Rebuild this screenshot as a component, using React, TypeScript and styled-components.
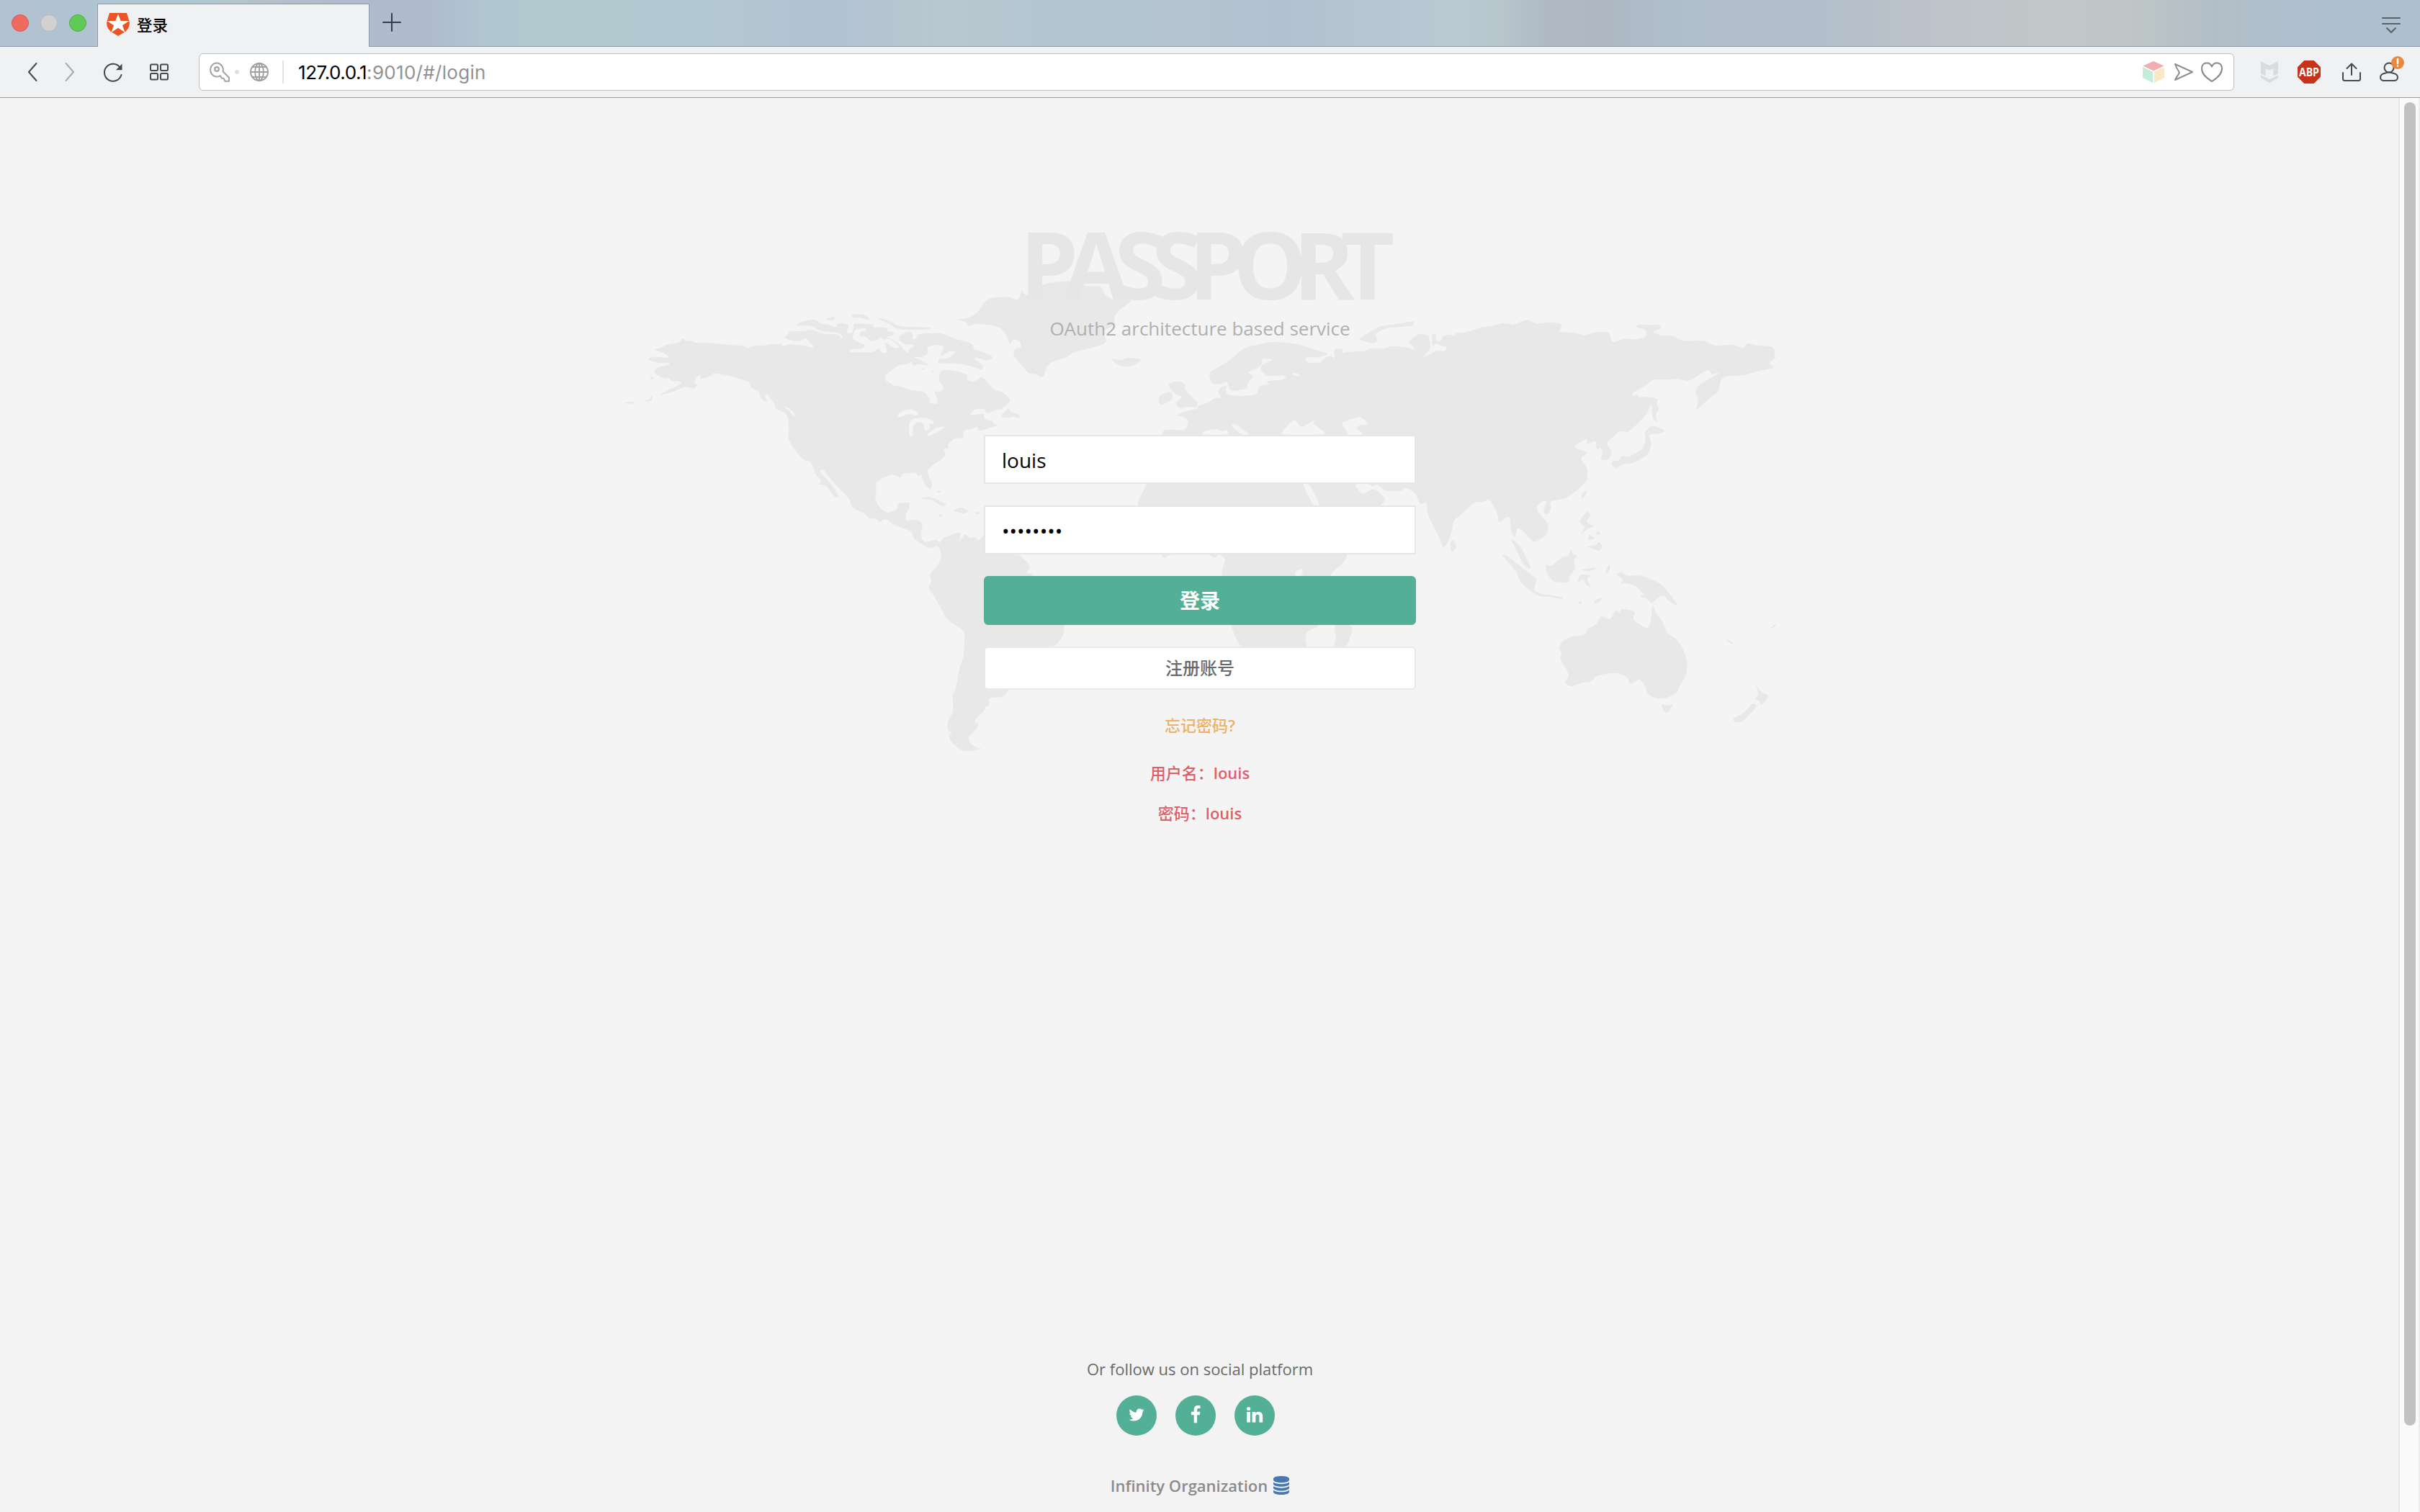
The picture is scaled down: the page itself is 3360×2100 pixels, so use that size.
import React from "react";
import styled, { createGlobalStyle } from "styled-components";

const LAND = "#e8e8e8";
const WATER = "#f4f4f4";
const GREEN = "#53b096";

const GlobalStyle = createGlobalStyle`
  *, *::before, *::after { box-sizing: border-box; }
  html, body { margin: 0; padding: 0; }
  body {
    font-family: "Open Sans", "Noto Sans CJK SC", sans-serif;
    background: #f3f3f3;
    overflow: hidden;
  }
`;

/* ---------- browser frame ---------- */

const Browser = styled.div`
  width: 3360px;
  height: 2100px;
  display: flex;
  flex-direction: column;
  overflow: hidden;
`;

const TabStrip = styled.header`
  height: 65px;
  flex: none;
  display: flex;
  align-items: stretch;
  border-bottom: 1px solid #8a98a8;
  background: linear-gradient(
    90deg,
    #b3c1d1 0%, #b0c4d1 4%, #afc7d0 8%, #b5c3cc 10%, #b0bbcb 14%, #afbacd 17.5%,
    #b0c6d0 20%, #b2c9cf 22.5%, #b3c8d1 30%, #b1c2d2 34%, #b9c8cf 39%, #b2c5d1 44%,
    #b4c5d1 48%, #b2c1d0 53%, #bacad3 60%, #b8c6cd 62%, #aeb9c3 64%, #adb8c2 66.5%,
    #b0becb 69%, #b4bfca 76%, #bec3ca 80%, #c2c8c8 85%, #bdc5c6 88.5%, #b2bec7 91.5%,
    #afbfce 95%, #aebfce 100%
  );
`;

const WindowButtons = styled.div`
  width: 135px;
  display: flex;
  gap: 16px;
  padding: 20px 0 0 16px;
`;

const WindowDot = styled.span<{ $fill: string; $edge: string }>`
  width: 24px;
  height: 24px;
  border-radius: 50%;
  background: ${(p) => p.$fill};
  border: 1px solid ${(p) => p.$edge};
`;

const Tab = styled.div`
  width: 378px;
  height: 61px;
  margin: 5px 0 -1px;
  padding: 0 0 4px 12px;
  display: flex;
  align-items: center;
  gap: 10px;
  background: #eff1f3;
  border: 1px solid #8a98a8;
  border-bottom: none;
`;

const TabTitle = styled.span`
  font: 500 21.5px/24px "Noto Sans CJK SC", sans-serif;
  padding-bottom: 1px;
  color: #000;
`;

const NewTab = styled.div`
  padding: 18px 0 0 18px;
`;

const TabMenu = styled.div`
  margin-left: auto;
  padding: 22px 27px 0 0;
`;

const Toolbar = styled.nav`
  height: 71px;
  flex: none;
  display: flex;
  align-items: center;
  padding: 0 29px 0 36px;
  background: #eff1f3;
  border-bottom: 1px solid #8f9ba7;
`;

const NavIcons = styled.div`
  width: 240px;
  display: flex;
  align-items: center;
`;

const AddressBar = styled.div`
  width: 2826px;
  height: 52px;
  display: flex;
  align-items: center;
  padding: 0 15px 0 14px;
  background: #fff;
  border: 1px solid #b9bdc1;
  border-radius: 6px;
`;

const SecurityDot = styled.span`
  width: 6px;
  height: 6px;
  margin: 0 15px 0 7px;
  border-radius: 50%;
  background: #dde1e3;
`;

const Divider = styled.span`
  width: 2px;
  height: 32px;
  margin: 0 20px 0 19px;
  background: #e1e2e4;
`;

const Url = styled.span`
  flex: 1;
  padding-top: 2px;
  font: 400 26px/32px Inter, "Liberation Sans", sans-serif;
  letter-spacing: 0.3px;
  color: #929292;
  b { font-weight: 400; color: #000; letter-spacing: -0.42px; }
`;

const Extensions = styled.div`
  flex: 1;
  display: flex;
  align-items: center;
  justify-content: flex-end;
`;

const Glyph = styled.svg<{ $gap?: number }>`
  display: block;
  flex: none;
  margin-left: ${(p) => p.$gap ?? 0}px;
  overflow: visible;
`;

/* ---------- page ---------- */

const Viewport = styled.div`
  flex: 1;
  display: flex;
  min-height: 0;
`;

const Page = styled.main`
  position: relative;
  width: 3330px;
  padding-left: 2px;
  display: flex;
  flex-direction: column;
  align-items: center;
  background: linear-gradient(180deg, #f3f3f3 0, #f4f4f4 130px, #f4f4f4 1030px, #f3f3f3 1036px, #f3f3f3 100%);
`;

const ScrollTrack = styled.aside`
  width: 30px;
  padding: 6px 4px 0 6px;
  background: #fafafa;
  border-left: 2px solid #e7e7e7;
  border-right: 2px solid #ececec;
`;

const ScrollThumb = styled.div`
  width: 16px;
  height: 1838px;
  border-radius: 8px;
  background: #c1c1c1;
`;

const WorldMap = styled.svg`
  position: absolute;
  left: 840px;
  top: 244px;
  width: 1660px;
  height: 680px;
`;

const Content = styled.div`
  position: relative;
  width: 600px;
  flex: 1;
  display: flex;
  flex-direction: column;
  align-items: center;
`;

const Logo = styled.h1`
  margin: 165px 0 0;
  height: 130px;
  font-size: 130px;
  line-height: 130px;
  font-weight: 700;
  letter-spacing: -20px;
  color: #e6e6e6;
`;

const Tagline = styled.h3`
  margin: 5px 0 0;
  height: 40px;
  font-size: 26px;
  line-height: 40px;
  font-weight: 400;
  color: #b0b0b0;
  white-space: nowrap;
`;

const Form = styled.form`
  width: 600px;
  margin-top: 128px;
  display: flex;
  flex-direction: column;
  gap: 30px;
`;

const Field = styled.input`
  width: 100%;
  height: 68px;
  padding: 1px 23px 0;
  border: 2px solid #e5e6e7;
  border-radius: 2px;
  background: #fff;
  font: 400 28px/40px "Open Sans", sans-serif;
  color: #000;
  outline: none;
`;

const Button = styled.button<{ $primary?: boolean }>`
  width: 100%;
  height: ${(p) => (p.$primary ? 68 : 60)}px;
  padding: 0 0 3px;
  border: 2px solid ${(p) => (p.$primary ? GREEN : "#e7eaec")};
  border-radius: 6px;
  background: ${(p) => (p.$primary ? GREEN : "#fff")};
  color: ${(p) => (p.$primary ? "#fff" : "#676a6c")};
  font: ${(p) => (p.$primary ? "700 28px/40px" : "500 24px/34px")} "Noto Sans CJK SC", sans-serif;
`;

const Note = styled.p<{ $color: string; $top: number }>`
  margin: ${(p) => p.$top}px 0 0;
  height: 30px;
  font-size: 22px;
  line-height: 30px;
  font-weight: 600;
  color: ${(p) => p.$color};
  white-space: nowrap;
`;

const Cjk = styled.span`
  font-family: "Noto Sans CJK SC", sans-serif;
  font-weight: 500;
`;

const Footer = styled.footer`
  margin-top: auto;
  height: 214px;
  display: flex;
  flex-direction: column;
  align-items: center;
`;

const FollowText = styled.p`
  margin: 0;
  font-size: 22px;
  line-height: 30px;
  color: #676a6c;
`;

const SocialRow = styled.div`
  display: flex;
  gap: 26px;
  margin: 22px 11px 0 0;
`;

const SocialLink = styled.a`
  width: 56px;
  height: 56px;
  border-radius: 50%;
  background: ${GREEN};
  display: flex;
  align-items: center;
  justify-content: center;
  padding-bottom: 2px;
`;

const Organization = styled.div`
  display: flex;
  align-items: center;
  margin-top: 53px;
  font-size: 22px;
  line-height: 32px;
  font-weight: 600;
  color: #8b8b8b;
`;

/* ---------- map geometry ---------- */

type Ring = string;

/* Turns a list of "x y" pairs into a closed path with softly rounded corners. */
function coast(ring: Ring): string {
  const n = ring.trim().split(/[\s,]+/).map(Number);
  const pts: [number, number][] = [];
  for (let i = 0; i + 1 < n.length; i += 2) pts.push([n[i], n[i + 1]]);
  const mix = (a: [number, number], b: [number, number], t: number) =>
    `${(a[0] + (b[0] - a[0]) * t).toFixed(1)} ${(a[1] + (b[1] - a[1]) * t).toFixed(1)}`;
  let d = "";
  pts.forEach((p, i) => {
    const prev = pts[(i + pts.length - 1) % pts.length];
    const next = pts[(i + 1) % pts.length];
    d += `${i ? "L" : "M"}${mix(p, prev, 0.32)}Q${p[0]} ${p[1]} ${mix(p, next, 0.32)}`;
  });
  return d + "Z";
}

interface Region {
  transform: string;
  land: Ring[];
  water: Ring[];
}

const REGIONS: Region[] = [
  {
    transform: "scale(0.35714 0.33333)",
    land: [
      `187 317 215 310 240 296 290 287 301 270 318 282 335 279 350 289 400 288 500 299 535 298 555 314 575 300 630 299 648 291
       675 296 685 289 690 304 715 294 775 299 815 313 800 292 780 266 764 280 735 281 695 269 710 254 714 240 770 240 808 232
       850 254 905 251 925 277 920 252 885 243 838 240 800 217 738 217 765 200 800 191 825 195 835 207 880 215 895 226 906 204
       950 212 937 250 960 248 968 225 965 208 1043 210 1045 226 1075 222 1100 228 1095 240 1125 243 1120 258 1090 262 1110 272 1140 290
       1155 308 1170 325 1178 330 1180 318 1207 298 1165 295 1142 277 1145 258 1180 240 1195 248 1197 276 1213 270 1215 252 1305 246
       1360 272 1428 290 1435 318 1460 322 1512 347 1488 363 1440 350 1436 356 1470 382 1468 402 1425 387 1400 380 1350 372 1295 376
       1298 355 1335 355 1367 325 1340 321 1308 346 1303 332 1322 305 1292 295 1250 307 1258 330 1235 350 1197 346 1235 364
       1264 384 1215 376 1202 387 1188 362 1183 376 1145 380 1120 398 1088 425 1092 448 1110 455 1120 468 1150 470 1185 485 1242 492
       1262 520 1262 541 1292 543 1292 520 1278 490 1310 492 1316 470 1298 450 1302 404 1350 402 1410 420 1408 445 1432 451 1450 440
       1466 427 1515 486 1545 492 1582 528 1540 565 1510 570 1495 582 1478 578 1475 563 1440 563 1412 592 1475 582 1472 600
       1490 612 1505 613 1510 626 1532 632 1500 640 1455 657 1445 635 1430 647 1395 652 1395 685 1355 687 1335 710 1335 731
       1316 728 1326 760 1253 815 1255 835 1274 880 1265 902 1240 875 1232 838 1215 845 1210 828 1160 832 1148 852 1135 842 1110 837
       1082 850 1053 870 1055 905 1050 935 1060 965 1085 990 1100 997 1135 985 1138 957 1185 953 1183 975 1170 1000 1170 1030
       1215 1024 1236 1045 1228 1080 1230 1105 1248 1120 1290 1108 1306 1128 1262 1145 1232 1128 1200 1105 1192 1072 1130 1052
       1090 1020 1068 1037 1055 1022 1025 1018 1010 1000 960 975 948 935 920 905 880 860 848 815 833 822 885 885 908 925 900 935
       880 915 858 880 830 880 842 862 820 840 800 783 770 777 735 730 711 690 716 635 710 595 700 580 663 562 660 545 630 500
       620 510 634 540 604 520 600 490 568 478 562 452 500 430 425 413 405 430 370 440 371 420 360 425 345 455 361 462 345 480
       312 470 265 492 208 508 245 485 297 460 293 449 258 448 243 430 238 440 215 432 188 410 205 390 250 380 250 370 210 375
       165 357 185 345 250 352 240 337 215 326`,
      "850 192 895 175 891 196",
      "957 169 1012 171 1030 192 1010 190 990 182 957 184",
      "1052 182 1100 193 1145 221 1258 223 1272 231 1190 235 1135 232 1105 210",
      "73 538 95 533 118 538 95 543",
      "150 531 172 525 185 505 183 528 165 534",
      "172 436 186 428 190 437 180 440",
      "1229 398 1240 393 1244 402",
      "1267 408 1274 402 1278 412",
    ],
    water: [
      "950 328 955 315 1000 315 1012 296 988 288 960 272 972 232 1010 226 1020 236 990 244 990 260 1018 264 1032 284 1062 276 1072 262 1086 280 1098 330 1072 330 1066 308 1044 328",
      "1080 280 1100 268 1124 284 1148 308 1128 312 1098 292",
      "1136 590 1150 577 1185 562 1221 580 1212 593 1185 584 1145 600",
      "1183 678 1182 620 1205 602 1245 600 1275 612 1279 630 1260 622 1261 652 1242 654 1240 622 1215 618 1197 635 1196 678",
      "1248 682 1260 662 1290 640 1327 637 1290 662",
      "693 553 715 560 738 582 734 597 718 572",
    ],
  },
  {
    transform: "translate(360 0) scale(0.35714 0.44643)",
    land: [
      `230 840 268 832 285 845 310 820 374 803 370 832 382 820 392 810 412 824 430 819 445 832 462 815 480 810 540 860 600 872
       648 910 628 935 652 930 652 940 700 942 760 980 785 1040 778 1090 775 1125 745 1157 715 1160 640 1180 600 1230 560 1296 543 1317
       485 1320 485 1345 466 1348 472 1356 425 1392 447 1402 430 1422 405 1440 410 1460 440 1477 462 1476 410 1487 375 1483
       335 1455 328 1437 342 1430 322 1418 325 1390 346 1365 343 1305 355 1295 370 1230 375 1215 385 1195 391 1125 385 1110
       320 1075 300 1045 270 1000 247 978 263 955 253 935 285 910 301 880 292 852 270 843 250 854`,
      `356 143 400 140 440 122 470 85 500 74 560 72 600 84 612 48 628 70 700 30 800 22 860 40 920 38 935 65 965 82 1047 80
       990 115 970 135 975 160 925 180 945 215 880 232 810 245 785 262 725 275 705 295 700 320 685 323 665 312 640 312
       605 280 577 250 590 230 610 232 606 210 580 203 565 222 553 190 530 168 490 160 430 155 405 164 395 150`,
      "960 263 1000 270 1020 261 1082 266 1050 285 1015 291 978 282",
      "526 448 558 419 572 433 598 435 608 451 580 444 560 448",
      "211 700 250 693 280 702 324 720 300 724 262 703",
      "344 738 375 726 408 740 385 747",
      "431 742 446 740 447 748 436 749",
      "288 752 296 747 304 752 296 758",
      "283 678 291 674 299 679 290 683",
    ],
    water: [],
  },
  {
    transform: "translate(720 20) scale(0.34444)",
    land: [
      `211 515 250 495 298 488 300 475 335 465 375 440 396 446 381 422 390 400 418 392 412 412 418 432 470 435 540 431 545 395 592 388
       573 376 640 370 658 360 640 351 578 357 551 328 555 312 608 287 558 285 558 305 545 320 498 340 526 355 498 385 500 405 430 418
       415 374 400 387 360 388 350 375 344 340 390 315 430 290 480 245 530 230 600 215 700 225 760 245 828 265 790 281 733 278 740 302
       796 302 802 287 835 272 852 286 848 245 884 245 880 264 900 258 970 255 1000 242 1050 246 1080 233 1140 238 1174 250 1170 238
       1145 215 1195 182 1235 193 1262 180 1330 180 1370 182 1440 160 1500 150 1525 142 1580 148 1580 920 1555 920 1535 925 1511 947
       1508 905 1470 848 1455 862 1415 862 1330 935 1325 975 1310 1020 1288 1052 1275 1010 1225 910 1222 862 1205 872 1188 860
       1180 830 1140 804 1115 820 1055 818 1020 790 1005 800 985 790 928 790 962 836 1008 806 1058 850 1035 880
       940 960 908 1060 890 1105 825 1160 795 1360 740 1385 732 1410 742 1460 475 1460 430 1359 395 1160 400 1125 413 1095
       385 1072 365 1091 345 1073 180 1075 165 1090 150 1073 60 930 57 860 95 790 155 600 160 570 250 574 262 535 240 518`,
      "178 385 220 374 250 388 246 405 265 430 300 460 295 482 250 478 225 487 207 465 240 437 210 430 193 412",
      "143 435 182 417 199 428 195 450 155 473 140 465",
      "848 1355 928 1359 900 1450 846 1450 858 1410",
      "945 207 1030 155 1100 145 1174 134 1165 153 1110 158 1060 160 1014 185 1024 215 1005 225 965 212",
      "1318 1022 1330 1016 1343 1045 1325 1066 1317 1055",
    ],
    water: [
      "314 592 322 577 378 567 395 580 415 571 428 592",
      "436 547 452 550 512 592 480 594 440 562",
      "636 592 638 580 685 529 700 540 715 564 772 530 764 548 826 592",
      "876 545 915 530 955 517 992 550 945 555 938 566 972 594 905 596 900 575",
      "718 784 750 790 794 880 765 880",
      "691 1162 692 1140 722 1133 722 1150 712 1165",
      "677 342 700 343 711 356 690 355",
      "1226 180 1246 190 1242 235 1265 222 1276 234 1302 236 1298 256 1262 252 1204 284 1240 240",
      "1256 170 1262 215 1280 215 1284 194 1320 186 1352 208 1362 226 1372 222 1366 204 1326 176 1320 164",
    ],
  },
  {
    transform: "translate(1100 20) scale(0.35714 0.40816)",
    land: [
      `216 152 270 153 330 132 370 131 408 118 445 128 505 106 540 122 580 117 635 120 640 130 626 150 690 152 725 162 765 150
       825 149 832 182 848 185 875 172 920 175 965 169 970 142 923 132 940 123 975 126 1018 124 1029 137 990 149 1025 162 1070 162
       1112 181 1190 178 1230 197 1310 192 1345 208 1362 186 1390 195 1455 198 1468 210 1465 228 1473 238 1443 255 1469 273
       1410 280 1350 298 1270 300 1255 320 1248 355 1220 370 1158 420 1173 385 1158 355 1170 330 1262 284 1222 296 1215 278
       1190 285 1135 319 1090 308 1055 313 995 310 960 335 912 358 918 369 932 361 940 373 970 369 1014 378 1008 393 1019 412
       1003 430 1011 459 993 445 988 390 970 430 930 465 895 493 865 485 835 510 811 528 834 555 830 575 812 588 790 583 800 555
       788 542 775 554 772 518 736 533 740 511 687 537 700 548 744 560 710 580 738 610 740 655 690 695 650 718 592 726 600 750
       585 770 568 765 572 745 582 728 570 722 535 748 585 800 588 825 578 842 530 868 485 823 466 816 457 853 442 825 438 780
       422 780 395 801 390 765 355 714 343 725 300 725 245 775 215 790 212 830 179 887 170 860 120 775 118 723 90 737 78 705
       70 640 70 400 200 400`,
      "960 492 990 466 1045 485 1015 496 975 498 990 530 975 568 920 595 890 598 865 602 852 617 833 602 835 588 860 590 870 570 900 575 950 550 962 530 966 502",
      "713 718 722 695 739 687 732 708",
      "705 793 740 758 752 772 732 797 770 810 742 818 709 843 732 815",
      "745 838 772 853 740 858",
      "770 834 785 826 792 836 780 842",
      "733 880 775 875 782 861 799 878 785 896 765 888",
      "440 855 455 860 480 880 521 952 510 955 490 940 460 885",
      "401 903 430 912 510 970 544 988 530 1028 555 1040 585 1045 648 1053 640 1059 590 1050 545 1048 480 1005 460 960",
      "576 938 598 948 640 915 665 912 675 887 685 908 702 910 685 930 694 950 668 985 668 1003 605 1000 580 970",
      "699 1006 710 973 758 978 735 990 758 1024 735 1010 722 990",
      "717 958 778 950 760 962 720 962",
      "808 965 826 937 828 955 815 975",
      "849 973 870 965 890 980 945 977 1025 1005 1090 1075 1090 1084 1050 1062 1040 1047 1015 1050 990 1076 970 1055 941 1052 960 1042 930 1015 890 1003 866 1009 878 992",
      "702 1070 711 1065 720 1070 710 1078",
      "761 1077 775 1058 799 1054 790 1066",
      `627 1225 640 1203 670 1188 732 1180 738 1160 775 1145 790 1114 828 1130 850 1093 862 1106 872 1091 926 1100 915 1130
       972 1161 985 1140 990 1090 995 1078 1005 1105 1035 1140 1050 1178 1080 1190 1110 1225 1128 1270 1125 1315 1100 1350
       1085 1380 1045 1395 1005 1398 970 1380 965 1355 940 1328 930 1338 902 1349 897 1325 850 1308 775 1318 755 1340 720 1343
       675 1358 648 1343 669 1320 652 1290 632 1260 640 1243`,
      "1024 1414 1050 1422 1074 1414 1055 1444 1038 1444",
      "1394 1347 1412 1375 1449 1387 1415 1422 1408 1405 1389 1398 1405 1385",
      "1303 1467 1350 1445 1382 1411 1401 1422 1340 1478 1312 1478",
      "1276 1194 1305 1205 1300 1213",
      "1444 1161 1473 1141 1468 1153",
    ],
    water: [],
  },
];

const MapBackdrop = () => (
  <WorldMap viewBox="0 0 1660 680" aria-hidden="true">
    {REGIONS.map((r) => (
      <g key={r.transform} transform={r.transform}>
        {r.land.map((ring) => (
          <path key={ring} d={coast(ring)} fill={LAND} />
        ))}
        {r.water.map((ring) => (
          <path key={ring} d={coast(ring)} fill={WATER} />
        ))}
      </g>
    ))}
  </WorldMap>
);

/* ---------- icons ---------- */

const line = (color: string, width = 2) => ({
  fill: "none",
  stroke: color,
  strokeWidth: width,
  strokeLinecap: "round" as const,
  strokeLinejoin: "round" as const,
});

const Favicon = () => (
  <Glyph width="32" height="32" viewBox="0 0 32 32">
    <path
      fill="#eb5424"
      d="M4 0H28L31.3 11C33 17.5 30 22.5 26 26L16 32 6 26C2 22.500-1 17.500.7 11Z"
    />
    <path fill="#fff" d="M16 1.500 19.700 11H31.200L22 17.200 25.500 27 16 20.800 6.500 27 10 17.200.8 11H12.300Z" />
  </Glyph>
);

const Plus = () => (
  <Glyph width="26" height="26" viewBox="0 0 26 26">
    <path d="M13 1V25M1 13H25" {...line("#363c43")} />
  </Glyph>
);

const MenuIcon = () => (
  <Glyph width="26" height="24" viewBox="0 0 26 24">
    <path d="M1 3H25M1 11H25M7 17l6 6 6-6" {...line("#59626b")} />
  </Glyph>
);

const Back = () => (
  <Glyph width="14" height="26" viewBox="0 0 14 26" $gap={2}>
    <path d="M12.500 1 2 13 12.500 25" {...line("#47494b")} />
  </Glyph>
);

const Forward = () => (
  <Glyph width="14" height="26" viewBox="0 0 14 26" $gap={38}>
    <path d="M1.500 1 12 13 1.500 25" {...line("#a9abad")} />
  </Glyph>
);

const Reload = () => (
  <Glyph width="26" height="26" viewBox="0 0 26 26" $gap={40}>
    <path d="M22.500 6.500A12 12 0 1 0 24.500 17" {...line("#47494b")} />
    <path fill="#47494b" d="M25.500 1.500V10.300H17Z" />
  </Glyph>
);

const Speed = () => (
  <Glyph width="26" height="24" viewBox="0 0 26 24" $gap={38}>
    <g {...line("#47494b")}>
      <rect x="1" y="1.500" width="10" height="8.500" rx="1.500" />
      <rect x="15" y="1.500" width="10" height="8.500" rx="1.500" />
      <rect x="1" y="14" width="10" height="8.500" rx="1.500" />
      <rect x="15" y="14" width="10" height="8.500" rx="1.500" />
    </g>
  </Glyph>
);

const KeyIcon = () => (
  <Glyph width="28" height="28" viewBox="0 0 28 28">
    <path d="M10.500 1.500a9 9.500 0 1 0 3 18.300l1.500-.6 2 3.500h2.500l2 4h5.500v-5l-8.500-8.400A9.500 9.500 0 0 0 10.500 1.500Z" {...line("#a3a3a3")} />
    <circle cx="10" cy="10" r="2.800" fill="none" stroke="#a3a3a3" strokeWidth="2.200" />
  </Glyph>
);

const Globe = () => (
  <Glyph width="26" height="26" viewBox="0 0 26 26">
    <g {...line("#a0a0a0", 1.9)}>
      <circle cx="13" cy="13" r="12" />
      <ellipse cx="13" cy="13" rx="5.800" ry="12" />
      <path d="M13 1V25M1 13H25M3.500 6H22.500M3.500 20H22.500" />
    </g>
  </Glyph>
);

const Cube = () => (
  <Glyph width="30" height="30" viewBox="0 0 30 30">
    <path fill="#f1aeb2" d="M15 0 29.500 6.500 15 13.500.5 6.500Z" />
    <path fill="#c5ebdb" d="M0 8 14.300 14.700V30.200L0 23Z" />
    <path fill="#fae7c6" d="M30 8 15.800 14.700V30.200L30 23Z" />
  </Glyph>
);

const Send = () => (
  <Glyph width="28" height="26" viewBox="0 0 28 26" $gap={13}>
    <path d="M2 2 26 13 2 24C5 17 9.500 15 7 12Q4 8 2 2Z" {...line("#8f8f8f")} />
  </Glyph>
);

const Heart = () => (
  <Glyph width="30" height="28" viewBox="0 0 30 28" $gap={10}>
    <path d="M15 6.500C12-.8 1-.5 1 9.500 1 18.500 10.500 24 15 27 19.500 24 29 18.500 29 9.500 29-.5 18-.8 15 6.500Z" {...line("#8a8a8a")} />
  </Glyph>
);

const McAfee = () => (
  <Glyph width="24" height="30" viewBox="0 0 24 30">
    <path fill="#d9dbdd" d="M0 0 12 6 24 0V17.500L17.500 20.500V10L12 12.500 6.500 10V20.500L0 17.500Z" />
    <path fill="#d9dbdd" d="M0 19.500 12 25 24 19.500V23L12 30 0 23Z" />
  </Glyph>
);

const AdBadge = styled.span`
  width: 32px;
  height: 32px;
  margin-left: 27px;
  flex: none;
  display: flex;
  align-items: center;
  justify-content: center;
  background: #c8321b;
  clip-path: polygon(29% 0, 71% 0, 100% 29%, 100% 71%, 71% 100%, 29% 100%, 0 71%, 0 29%);
  font: 700 16px/32px "Open Sans", sans-serif;
  span { transform: scaleX(0.88); }
  color: #fff;
`;

const Share = () => (
  <Glyph width="26" height="26" viewBox="0 0 26 26" $gap={30}>
    <path d="M1 14V22.500Q1 25 3.500 25H22.500Q25 25 25 22.500V14M13 17V1.500M6.500 8 13 1.500 19.500 8" {...line("#47494b")} />
  </Glyph>
);

const Person = () => (
  <Glyph width="28" height="28" viewBox="0 0 28 28" $gap={25}>
    <g {...line("#47494b")}>
      <circle cx="14" cy="8" r="6.500" />
      <path d="M9 15.500C4 16.500 2 18.500 2 21.500S4.500 26 7 26H21c2.500 0 5-1.500 5-4.500S24 16.500 19 15.500Q14 13.500 9 15.500Z" />
    </g>
    <circle cx="26" cy="1" r="9" fill="#e8893d" />
    <path d="M26-4V2M26 5.500V5.600" stroke="#fff" strokeWidth="2.600" strokeLinecap="round" />
  </Glyph>
);

const FontIcon = ({ d, color, size }: { d: string; color: string; size: number }) => (
  <Glyph width={size} height={size} viewBox="0 0 1792 1792">
    <path fill={color} d={d} />
  </Glyph>
);

const TWITTER =
  "M1684 408q-67 98-162 167 1 14 1 42 0 130-38 259.500t-115.500 248.500-184.500 210.500-258 146-323 54.500q-271 0-496-145 35 4 78 4 225 0 401-138-105-2-188-64.500t-114-159.500q33 5 61 5 43 0 85-11-112-23-185.500-111.500t-73.500-205.500v-4q68 38 146 41-66-44-105-115t-39-154q0-88 44-163 121 149 294.500 238.500t371.500 99.500q-8-38-8-74 0-134 94.500-228.500t228.500-94.500q140 0 236 102 109-21 205-78-37 115-142 178 93-10 186-50z";
const FACEBOOK =
  "M1343 12v264h-157q-86 0-116 36t-30 108v189h293l-39 296h-254v759h-306v-759h-255v-296h255v-218q0-186 104-288.500t277-102.500q147 0 228 12z";
const LINKEDIN =
  "M477 625v991h-330v-991h330zm21-306q1 73-50.500 122t-135.500 49h-2q-82 0-132-49t-50-122q0-74 51.500-122.500t134.500-48.500 133 48.500 51 122.500zm1166 729v568h-329v-530q0-105-40.500-164.500t-126.500-59.500q-63 0-105.500 34.500t-63.500 85.500q-11 30-11 81v553h-329q2-399 2-647t-1-296l-1-48h329v144h-2q20-32 41-56t56.500-52 87-43.500 114.500-15.500q171 0 275 113.500t104 332.500z";
const DATABASE =
  "M896 768q237 0 443-43t325-127v170q0 69-103 128t-280 93.500-385 34.500-385-34.500-280-93.500-103-128v-170q119 84 325 127t443 43zm0 768q237 0 443-43t325-127v170q0 69-103 128t-280 93.500-385 34.500-385-34.500-280-93.500-103-128v-170q119 84 325 127t443 43zm0-384q237 0 443-43t325-127v170q0 69-103 128t-280 93.500-385 34.500-385-34.500-280-93.500-103-128v-170q119 84 325 127t443 43zm0-1152q208 0 385 34.500t280 93.500 103 128v128q0 69-103 128t-280 93.500-385 34.500-385-34.500-280-93.500-103-128v-128q0-69 103-128t280-93.500 385-34.500z";

/* ---------- app ---------- */

export default function App() {
  return (
    <Browser>
      <GlobalStyle />
      <TabStrip>
        <WindowButtons>
          <WindowDot $fill="#ee6a5e" $edge="#dd5a4f" />
          <WindowDot $fill="#d1d1d1" $edge="#b9babb" />
          <WindowDot $fill="#61c955" $edge="#4db142" />
        </WindowButtons>
        <Tab>
          <Favicon />
          <TabTitle>登录</TabTitle>
        </Tab>
        <NewTab>
          <Plus />
        </NewTab>
        <TabMenu>
          <MenuIcon />
        </TabMenu>
      </TabStrip>

      <Toolbar>
        <NavIcons>
          <Back />
          <Forward />
          <Reload />
          <Speed />
        </NavIcons>
        <AddressBar>
          <KeyIcon />
          <SecurityDot />
          <Globe />
          <Divider />
          <Url>
            <b>127.0.0.1</b>:9010/#/login
          </Url>
          <Cube />
          <Send />
          <Heart />
        </AddressBar>
        <Extensions>
          <McAfee />
          <AdBadge>
            <span>ABP</span>
          </AdBadge>
          <Share />
          <Person />
        </Extensions>
      </Toolbar>

      <Viewport>
        <Page>
          <MapBackdrop />
          <Content>
            <Logo>PASSPORT</Logo>
            <Tagline>OAuth2 architecture based service</Tagline>
            <Form onSubmit={(e) => e.preventDefault()}>
              <Field type="text" defaultValue="louis" />
              <Field type="password" defaultValue="password" />
              <Button $primary type="submit">登录</Button>
              <Button type="button">注册账号</Button>
            </Form>
            <Note $color="#edb068" $top={33}>
              <Cjk>忘记密码</Cjk>?
            </Note>
            <Note $color="#de5f69" $top={36}>
              <Cjk>用户名：</Cjk>louis
            </Note>
            <Note $color="#de5f69" $top={26}>
              <Cjk>密码：</Cjk>louis
            </Note>
            <Footer>
              <FollowText>Or follow us on social platform</FollowText>
              <SocialRow>
                <SocialLink>
                  <FontIcon d={TWITTER} color="#fff" size={24} />
                </SocialLink>
                <SocialLink>
                  <FontIcon d={FACEBOOK} color="#fff" size={26} />
                </SocialLink>
                <SocialLink>
                  <FontIcon d={LINKEDIN} color="#fff" size={26} />
                </SocialLink>
              </SocialRow>
              <Organization>
                Infinity Organization
                <Glyph width="22" height="26" viewBox="128 0 1536 1792" preserveAspectRatio="none" $gap={8}>
                  <path fill="#4678b2" d={DATABASE} />
                </Glyph>
              </Organization>
            </Footer>
          </Content>
        </Page>
        <ScrollTrack>
          <ScrollThumb />
        </ScrollTrack>
      </Viewport>
    </Browser>
  );
}
